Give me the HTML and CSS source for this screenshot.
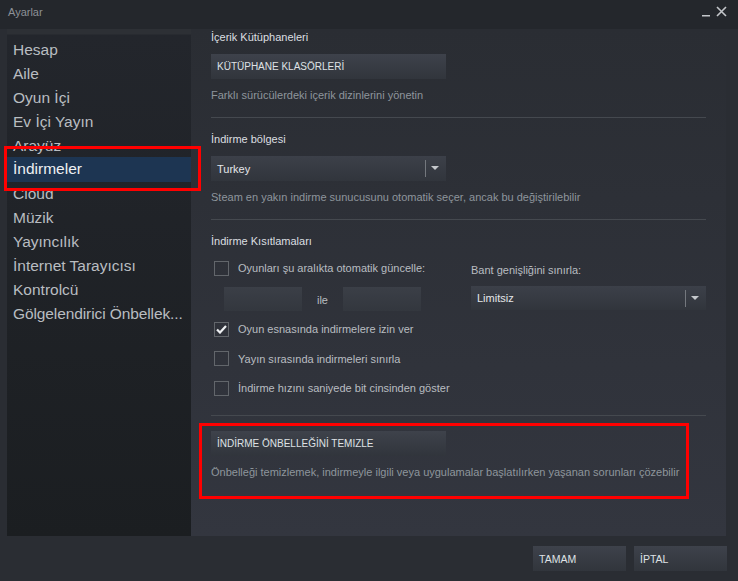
FILE: index.html
```html
<!DOCTYPE html>
<html lang="tr">
<head>
    <meta charset="UTF-8">
    <title>Ayarlar</title>
    <link rel="stylesheet" href="styles.css">
</head>
<body>
    <div class="window">
        <div class="titlebar">
            <span class="title">Ayarlar</span>
            <div class="window-buttons">
                <svg width="9" height="9" viewBox="0 0 9 9"><rect x="0" y="7" width="8" height="1.5" fill="#c3c6ca"/></svg>
                <svg width="11" height="11" viewBox="0 0 11 11"><path d="M1 1 L10 10 M10 1 L1 10" stroke="#c3c6ca" stroke-width="1.6"/></svg>
            </div>
        </div>

        <div class="main">
            <ul class="sidebar">
                <li>Hesap</li>
                <li>Aile</li>
                <li>Oyun İçi</li>
                <li>Ev İçi Yayın</li>
                <li>Arayüz</li>
                <li class="selected">İndirmeler</li>
                <li>Cloud</li>
                <li>Müzik</li>
                <li>Yayıncılık</li>
                <li>İnternet Tarayıcısı</li>
                <li>Kontrolcü</li>
                <li class="long">Gölgelendirici Önbellek...</li>
            </ul>

            <div class="panel">
                <div class="section">
                    <div class="heading">İçerik Kütüphaneleri</div>
                    <button class="btn wide">KÜTÜPHANE KLASÖRLERİ</button>
                    <div class="desc">Farklı sürücülerdeki içerik dizinlerini yönetin</div>
                </div>

                <div class="section">
                    <div class="heading">İndirme bölgesi</div>
                    <div class="dropdown wide">
                        <span>Turkey</span>
                        <span class="drop-arrow"></span>
                    </div>
                    <div class="desc">Steam en yakın indirme sunucusunu otomatik seçer, ancak bu değiştirilebilir</div>
                </div>

                <div class="section">
                    <div class="heading">İndirme Kısıtlamaları</div>
                    <div class="limits">
                        <div class="limits-left">
                            <label class="check-row"><span class="checkbox"></span>Oyunları şu aralıkta otomatik güncelle:</label>
                            <div class="time-row">
                                <div class="field"></div>
                                <span class="ile">ile</span>
                                <div class="field"></div>
                            </div>
                        </div>
                        <div class="limits-right">
                            <div class="label">Bant genişliğini sınırla:</div>
                            <div class="dropdown">
                                <span>Limitsiz</span>
                                <span class="drop-arrow"></span>
                            </div>
                        </div>
                    </div>
                    <div class="check-list">
                        <label class="check-row"><span class="checkbox checked">
                            <svg width="11" height="9" viewBox="0 0 11 9"><path d="M1 4.5 L4 7.5 L10 1" fill="none" stroke="#eef0f2" stroke-width="2.2"/></svg>
                        </span>Oyun esnasında indirmelere izin ver</label>
                        <label class="check-row"><span class="checkbox"></span>Yayın sırasında indirmeleri sınırla</label>
                        <label class="check-row"><span class="checkbox"></span>İndirme hızını saniyede bit cinsinden göster</label>
                    </div>
                </div>

                <div class="section last">
                    <button class="btn wide">İNDİRME ÖNBELLEĞİNİ TEMIZLE</button>
                    <div class="desc">Önbelleği temizlemek, indirmeyle ilgili veya uygulamalar başlatılırken yaşanan sorunları çözebilir</div>
                </div>
            </div>
        </div>

        <div class="footer">
            <button class="btn footer-btn">TAMAM</button>
            <button class="btn footer-btn">İPTAL</button>
        </div>

        <!-- red highlight marks -->
        <div class="mark mark-nav"></div>
        <div class="mark mark-cache"></div>
    </div>
</body>
</html>
```

FILE: styles.css
```css
body, html {
    margin: 0;
    padding: 0;
    width: 100%;
    height: 100%;
    overflow: hidden;
    background-color: #2a2d33;
    font-family: "Liberation Sans", Arial, sans-serif;
}

.window {
    position: relative;
    width: 738px;
    height: 581px;
    display: flex;
    flex-direction: column;
    background-color: #2a2d33;
}

.titlebar {
    height: 29px;
    flex-shrink: 0;
    display: flex;
    justify-content: space-between;
    align-items: flex-start;
    padding: 0 11px 0 8px;
    background-color: #24272c;
}

.title {
    margin-top: 6px;
    font-size: 11px;
    color: #8d9197;
}

.window-buttons {
    display: flex;
    align-items: flex-end;
    gap: 5px;
    margin-top: 6px;
}

.main {
    height: 507px;
    display: flex;
    margin: 0 12px 0 7px;
}

.sidebar {
    list-style: none;
    margin: 0;
    width: 184px;
    flex-shrink: 0;
    padding: 9px 0 0 0;
    box-sizing: border-box;
    background: linear-gradient(#2d3035 0, #2d3035 5px, #23262c 6px, #1b1e21 100%);
}

    .sidebar li {
        height: 24px;
        line-height: 24px;
        padding-left: 6px;
        font-size: 15.5px;
        color: #b9bdc1;
        white-space: nowrap;
    }

    .sidebar li.selected {
        margin-top: -1px;
        height: 25px;
        background-color: #1d3552;
        color: #eef0f2;
    }

    .sidebar li.long {
        letter-spacing: -0.1px;
    }

.panel {
    flex: 1;
    padding: 0 20px;
    background: linear-gradient(#2a2d33, #33363f);
}

.section {
    padding-bottom: 14px;
    border-bottom: 1px solid #45494f;
    margin-bottom: 13px;
}

    .section.last {
        border-bottom: none;
        padding-top: 2px;
    }

.heading {
    height: 16px;
    line-height: 16px;
    font-size: 11px;
    color: #dcdfe1;
    margin-bottom: 9px;
}

.desc {
    height: 16px;
    line-height: 16px;
    font-size: 11px;
    color: #8e959c;
    margin-top: 8px;
}

.btn {
    display: block;
    border: none;
    padding: 0 6px;
    height: 25px;
    text-align: left;
    font-family: "Liberation Sans", Arial, sans-serif;
    font-size: 10px;
    color: #dfe2e5;
    background: linear-gradient(#3e424b, #31353c);
}

.wide {
    width: 235px;
}

.dropdown {
    position: relative;
    height: 25px;
    display: flex;
    align-items: center;
    padding-left: 6px;
    box-sizing: border-box;
    font-size: 11px;
    color: #e4e7ea;
    background: linear-gradient(#3c4049, #31353c);
}

.drop-arrow {
    position: absolute;
    right: 0;
    top: 4px;
    width: 20px;
    height: 17px;
    border-left: 1px solid #74787e;
}

    .drop-arrow::after {
        content: "";
        position: absolute;
        left: 5px;
        top: 6px;
        border-left: 4px solid transparent;
        border-right: 4px solid transparent;
        border-top: 4px solid #c4c7cb;
    }

.limits {
    display: flex;
    margin-top: 11px;
}

.limits-left {
    width: 260px;
}

.limits-right {
    flex: 1;
}

    .limits-right .label {
        height: 16px;
        line-height: 16px;
        margin-top: 2px;
        font-size: 11px;
        color: #b9bdc1;
        margin-bottom: 8px;
    }

    .limits-right .dropdown {
        height: 24px;
    }

.check-row {
    display: flex;
    align-items: center;
    height: 16px;
    gap: 9px;
    padding-left: 3px;
    font-size: 11px;
    color: #b9bdc1;
}

.checkbox {
    width: 13px;
    height: 13px;
    border: 1px solid #62666b;
    display: flex;
    align-items: center;
    justify-content: center;
}

.time-row {
    display: flex;
    align-items: center;
    margin: 11px 0 0 13px;
    height: 24px;
}

.field {
    width: 78px;
    height: 24px;
    background: linear-gradient(#3b3f47, #33373e);
}

.ile {
    width: 41px;
    text-align: center;
    font-size: 11px;
    color: #b9bdc1;
    padding-top: 2px;
}

.check-list {
    display: flex;
    flex-direction: column;
    gap: 13.5px;
    margin-top: 10px;
    padding-bottom: 5px;
}

.footer {
    flex: 1;
    display: flex;
    justify-content: flex-end;
    align-items: flex-start;
    gap: 8px;
    padding: 10px 11px 0 0;
}

.footer-btn {
    width: 93px;
    height: 25px;
    font-size: 10.5px;
}

.mark {
    position: absolute;
    border: 3px solid #ff0000;
    box-sizing: border-box;
}

.mark-nav {
    left: 4px;
    top: 146px;
    width: 197px;
    height: 45px;
}

.mark-cache {
    left: 199px;
    top: 423px;
    width: 490px;
    height: 76px;
}
```
